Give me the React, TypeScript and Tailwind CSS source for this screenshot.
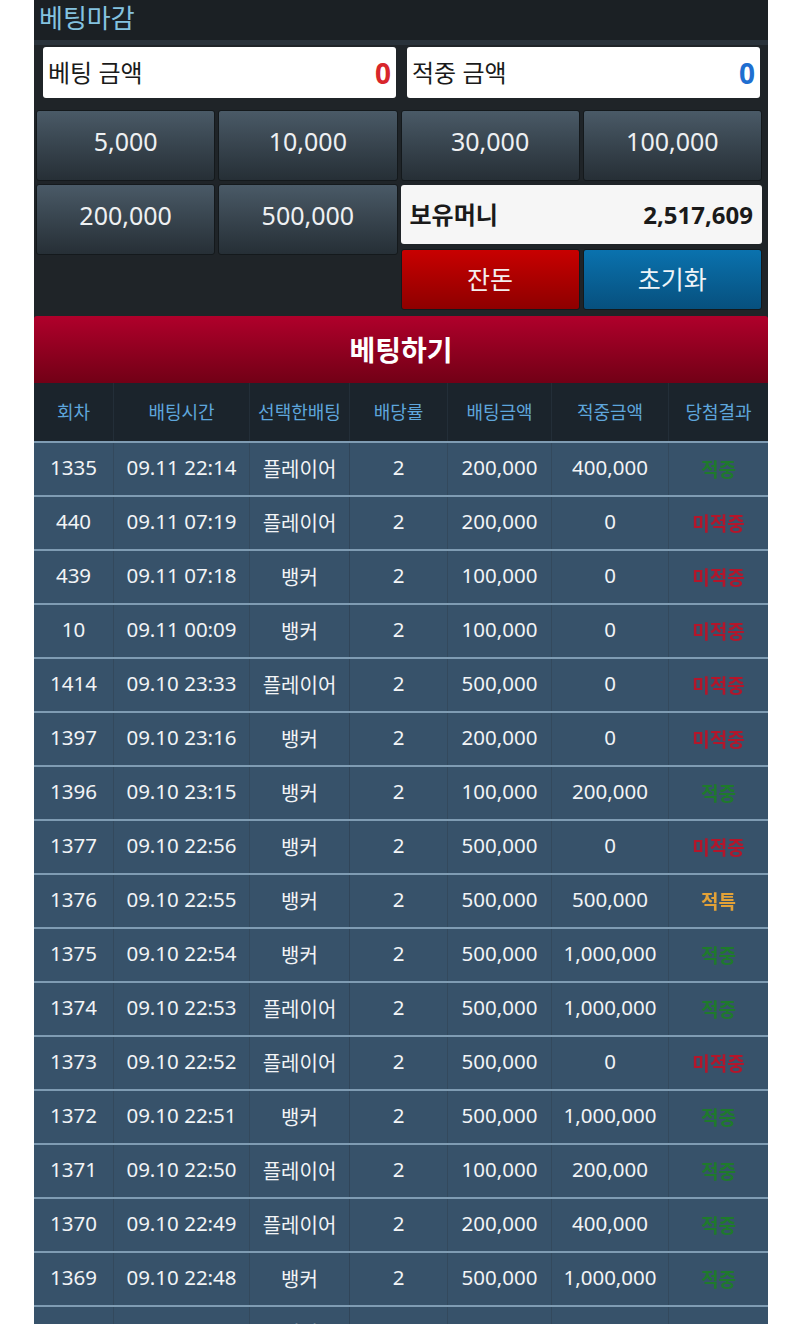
import React from 'react';

type Row = {
  round: string;
  time: string;
  pick: string;
  odds: string;
  bet: string;
  win: string;
  result: '적중' | '미적중' | '적특';
};

const rows: Row[] = [
  { round: '1335', time: '09.11 22:14', pick: '플레이어', odds: '2', bet: '200,000', win: '400,000', result: '적중' },
  { round: '440', time: '09.11 07:19', pick: '플레이어', odds: '2', bet: '200,000', win: '0', result: '미적중' },
  { round: '439', time: '09.11 07:18', pick: '뱅커', odds: '2', bet: '100,000', win: '0', result: '미적중' },
  { round: '10', time: '09.11 00:09', pick: '뱅커', odds: '2', bet: '100,000', win: '0', result: '미적중' },
  { round: '1414', time: '09.10 23:33', pick: '플레이어', odds: '2', bet: '500,000', win: '0', result: '미적중' },
  { round: '1397', time: '09.10 23:16', pick: '뱅커', odds: '2', bet: '200,000', win: '0', result: '미적중' },
  { round: '1396', time: '09.10 23:15', pick: '뱅커', odds: '2', bet: '100,000', win: '200,000', result: '적중' },
  { round: '1377', time: '09.10 22:56', pick: '뱅커', odds: '2', bet: '500,000', win: '0', result: '미적중' },
  { round: '1376', time: '09.10 22:55', pick: '뱅커', odds: '2', bet: '500,000', win: '500,000', result: '적특' },
  { round: '1375', time: '09.10 22:54', pick: '뱅커', odds: '2', bet: '500,000', win: '1,000,000', result: '적중' },
  { round: '1374', time: '09.10 22:53', pick: '플레이어', odds: '2', bet: '500,000', win: '1,000,000', result: '적중' },
  { round: '1373', time: '09.10 22:52', pick: '플레이어', odds: '2', bet: '500,000', win: '0', result: '미적중' },
  { round: '1372', time: '09.10 22:51', pick: '뱅커', odds: '2', bet: '500,000', win: '1,000,000', result: '적중' },
  { round: '1371', time: '09.10 22:50', pick: '플레이어', odds: '2', bet: '100,000', win: '200,000', result: '적중' },
  { round: '1370', time: '09.10 22:49', pick: '플레이어', odds: '2', bet: '200,000', win: '400,000', result: '적중' },
  { round: '1369', time: '09.10 22:48', pick: '뱅커', odds: '2', bet: '500,000', win: '1,000,000', result: '적중' },
  { round: '1367', time: '09.10 22:46', pick: '뱅커', odds: '2', bet: '500,000', win: '1,000,000', result: '적중' },
];

const headers = ['회차', '배팅시간', '선택한배팅', '배당률', '배팅금액', '적중금액', '당첨결과'];

const resultColor: Record<Row['result'], string> = {
  적중: 'text-[#1f7a2c]',
  미적중: 'text-[#b3162b]',
  적특: 'text-[#e3a237]',
};

const cols = 'grid grid-cols-[79px_136px_100px_98px_104px_117px_100px]';

const ChipButton = ({ label }: { label: string }) => (
  <button className="h-[71px] rounded-[3px] border border-[#14191c] bg-gradient-to-b from-[#4a5a67] to-[#262f36] pb-[8px] text-[25px] text-[#eef0f2]">
    {label}
  </button>
);

export default function App() {
  return (
    <div
      className="h-[1324px] overflow-hidden bg-white"
      style={{ fontFamily: '"Noto Sans", "Noto Sans CJK KR", sans-serif' }}
    >
      <div className="ml-[34px] w-[734px] bg-[#1f2428]">
        {/* Title */}
        <div className="h-[40px] bg-[#1b2024] pl-[5px] text-[26px] leading-[36px] text-[#84c3e0]">베팅마감</div>
        <div className="h-[5px] bg-[#29323a]" />

        {/* Amount boxes */}
        <div className="flex gap-[11px] pl-[9px] pr-[8px] pt-[2px]">
          <div className="flex h-[51px] flex-1 items-center justify-between rounded-[3px] bg-white px-[5px]">
            <span className="text-[24px] text-[#1a1a1a]">베팅 금액</span>
            <span className="text-[28px] font-bold text-[#d8262b]">0</span>
          </div>
          <div className="flex h-[51px] flex-1 items-center justify-between rounded-[3px] bg-white px-[5px]">
            <span className="text-[24px] text-[#1a1a1a]">적중 금액</span>
            <span className="text-[28px] font-bold text-[#1f6fd0]">0</span>
          </div>
        </div>

        {/* Chips */}
        <div className="grid grid-cols-4 gap-[3px] pl-[2px] pr-[6px] pt-[12px]">
          <ChipButton label="5,000" />
          <ChipButton label="10,000" />
          <ChipButton label="30,000" />
          <ChipButton label="100,000" />
          <ChipButton label="200,000" />
          <ChipButton label="500,000" />
          <div className="col-span-2 flex flex-col gap-[5px] pt-[1px]">
            <div className="flex h-[59px] items-center justify-between rounded-[3px] bg-[#f6f6f6] px-[9px]">
              <span className="text-[24px] font-bold text-[#1a1a1a]">보유머니</span>
              <span className="text-[24px] font-bold text-[#1a1a1a]">2,517,609</span>
            </div>
            <div className="grid grid-cols-2 gap-[3px]">
              <button className="h-[61px] rounded-[3px] border border-[#14191c] bg-gradient-to-b from-[#c80000] to-[#8e0000] text-[25px] text-[#f4eeee]">
                잔돈
              </button>
              <button className="h-[61px] rounded-[3px] border border-[#14191c] bg-gradient-to-b from-[#0a72ae] to-[#07507e] text-[25px] text-[#eef4f8]">
                초기화
              </button>
            </div>
          </div>
        </div>

        {/* Bet button */}
        <div className="pt-[6px]">
          <button className="flex h-[67px] w-full items-center justify-center rounded-t-[3px] bg-gradient-to-b from-[#b0002b] to-[#720016] text-[28px] font-bold text-white">
            베팅하기
          </button>
        </div>

        {/* Table */}
        <div className={`${cols} h-[58px] bg-[#1b242c]`}>
          {headers.map((h, i) => (
            <div
              key={h}
              className={`flex items-center justify-center text-[18px] text-[#5ea6dc] ${i > 0 ? 'border-l border-[#232e38]' : ''}`}
            >
              {h}
            </div>
          ))}
        </div>
        {rows.map((r) => (
          <div key={r.round} className={`${cols} h-[54px] border-t-2 border-[#7f9cb3] bg-[#37526a] text-[20.5px] text-[#f2f4f6]`}>
            <div className="flex items-center justify-center pb-[3px]">{r.round}</div>
            <div className="flex items-center justify-center border-l border-[#33495d] pb-[3px]">{r.time}</div>
            <div className="flex items-center justify-center border-l border-[#33495d] pt-[2px] text-[20px]">{r.pick}</div>
            <div className="flex items-center justify-center border-l border-[#304559] pb-[3px]">{r.odds}</div>
            <div className="flex items-center justify-center border-l border-[#33495d] pb-[3px]">{r.bet}</div>
            <div className="flex items-center justify-center border-l border-[#33495d] pb-[3px]">{r.win}</div>
            <div className="flex items-center justify-center border-l border-[#33495d] pt-[2px]">
              <span className={`text-[19px] font-bold blur-[0.6px] ${resultColor[r.result]}`}>{r.result}</span>
            </div>
          </div>
        ))}
      </div>
    </div>
  );
}
